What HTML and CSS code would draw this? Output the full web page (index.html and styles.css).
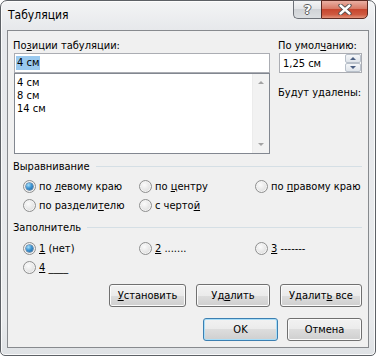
FILE: index.html
```html
<!DOCTYPE html>
<html lang="ru">
<head>
    <meta charset="UTF-8">
    <title>Табуляция</title>
    <link rel="stylesheet" href="styles.css">
</head>
<body>
    <div class="window">
        <div class="titlebar">
            <span class="title">Табуляция</span>
            <div class="caption">
                <div class="cap help">?</div>
                <div class="cap close">
                    <svg width="14" height="11" viewBox="0 0 14 11">
                        <path d="M2.5 1.5 L11.5 9.5 M11.5 1.5 L2.5 9.5" stroke="#4a4a4a" stroke-width="4.2" stroke-linecap="round" fill="none"/>
                        <path d="M2.5 1.5 L11.5 9.5 M11.5 1.5 L2.5 9.5" stroke="#fff" stroke-width="2.4" stroke-linecap="round" fill="none"/>
                    </svg>
                </div>
            </div>
        </div>

        <div class="client">
            <div class="top">
                <div class="positions">
                    <div class="lbl">По<u>з</u>иции табуляции:</div>
                    <div class="field"><span class="sel">4 см</span></div>
                    <div class="list">
                        <div class="items">
                            <div>4 см</div>
                            <div>8 см</div>
                            <div>14 см</div>
                        </div>
                        <div class="scrollbar">
                            <div class="sb-btn"><span class="arrow up"></span></div>
                            <div class="sb-btn"><span class="arrow down"></span></div>
                        </div>
                    </div>
                </div>
                <div class="defaults">
                    <div class="lbl">По умол<u>ч</u>анию:</div>
                    <div class="spin">
                        <span class="spin-value">1,25 см</span>
                        <div class="spin-btns">
                            <div class="spin-btn"><span class="tri up"></span></div>
                            <div class="spin-btn"><span class="tri down"></span></div>
                        </div>
                    </div>
                    <div class="cleared">Будут удалены:</div>
                </div>
            </div>

            <div class="group-head">Выравнивание</div>
            <div class="options">
                <div class="opt"><span class="radio checked"></span><span>по <u>л</u>евому краю</span></div>
                <div class="opt"><span class="radio"></span><span>по <u>ц</u>ентру</span></div>
                <div class="opt"><span class="radio"></span><span>по <u>п</u>равому краю</span></div>
                <div class="opt"><span class="radio"></span><span>по раздели<u>т</u>елю</span></div>
                <div class="opt"><span class="radio"></span><span>с черто<u>й</u></span></div>
            </div>

            <div class="group-head">Заполнитель</div>
            <div class="options fill">
                <div class="opt"><span class="radio checked"></span><span><u>1</u> (нет)</span></div>
                <div class="opt"><span class="radio"></span><span><u>2</u> .......</span></div>
                <div class="opt"><span class="radio"></span><span><u>3</u> -------</span></div>
                <div class="opt"><span class="radio"></span><span><u>4</u> ____</span></div>
            </div>

            <div class="btn-row">
                <button class="btn w77"><u>У</u>становить</button>
                <button class="btn w74">Уд<u>а</u>лить</button>
                <button class="btn w82">Удалит<u>ь</u> все</button>
            </div>
            <div class="btn-row second">
                <button class="btn w75 default">OK</button>
                <button class="btn w75">Отмена</button>
            </div>
        </div>
    </div>
</body>
</html>
```

FILE: styles.css
```css
body {
    margin: 0;
    background: #fff;
    font-family: "DejaVu Sans Condensed", "DejaVu Sans", sans-serif;
    font-stretch: condensed;
    font-size: 11px;
    color: #000;
    white-space: nowrap;
}

u {
    text-underline-offset: 1px;
}

.window {
    width: 376px;
    height: 356px;
    box-sizing: border-box;
    border: 1px solid #5d6166;
    border-radius: 7px 7px 5px 5px;
    background: linear-gradient(#f3f4f5, #e6e8eb 30px, #e8eaec 90%, #dfe2e5);
    box-shadow: inset 0 0 0 1px rgba(255, 255, 255, 0.8);
    padding: 0 6px 7px;
    display: flex;
    flex-direction: column;
}

.titlebar {
    height: 29px;
    display: flex;
    align-items: flex-start;
    flex-shrink: 0;
}

.title {
    padding: 7px 0 0 1px;
    line-height: 15px;
    font-size: 12px;
}

.caption {
    margin-left: auto;
    margin-right: 1px;
    margin-top: -1px;
    display: flex;
}

.cap {
    height: 19px;
    box-sizing: border-box;
    display: flex;
    align-items: center;
    justify-content: center;
}

.help {
    width: 28px;
    border: 1px solid #6d7178;
    border-right: none;
    border-radius: 0 0 0 5px;
    background: linear-gradient(#f4f5f6, #e3e5e8 45%, #d0d3d7 50%, #dcdfe2);
    color: #fff;
    font-family: "DejaVu Sans", sans-serif;
    font-stretch: normal;
    font-weight: bold;
    font-size: 13px;
    text-shadow: 1px 0 #5a5a5a, -1px 0 #5a5a5a, 0 1px #5a5a5a, 0 -1px #5a5a5a;
}

.close {
    width: 47px;
    border: 1px solid #5c2920;
    border-radius: 0 0 5px 0;
    background: linear-gradient(#eab0a3, #d87a66 45%, #c7462e 50%, #cf5a40 80%, #e3937b);
}

.client {
    flex: 1;
    border: 1px solid #878a8e;
    background: #f0f0f0;
    padding: 7px 6px 0;
    display: flex;
    flex-direction: column;
}

.top {
    display: grid;
    grid-template-columns: 256px 83px;
    column-gap: 9px;
}

.lbl {
    height: 15px;
    line-height: 15px;
    margin-left: -1px;
}

.field {
    height: 20px;
    box-sizing: border-box;
    border: 1px solid #abadb3;
    background: #fff;
    display: flex;
    align-items: center;
    padding-left: 1px;
}

.sel {
    background: #99c9ef;
    line-height: 14px;
    padding: 0 1px;
}

.list {
    height: 81px;
    box-sizing: border-box;
    border: 1px solid #828790;
    background: #fff;
    display: flex;
}

.items {
    flex: 1;
    padding: 2px 0 0 2px;
    line-height: 13px;
}

.scrollbar {
    width: 17px;
    background: #f2f2f2;
    border-left: 1px solid #ececec;
    box-sizing: border-box;
    display: flex;
    flex-direction: column;
    justify-content: space-between;
}

.sb-btn {
    height: 17px;
    display: flex;
    align-items: center;
    justify-content: center;
}

.arrow {
    width: 0;
    height: 0;
    border-left: 3px solid transparent;
    border-right: 3px solid transparent;
}

.arrow.up {
    border-bottom: 3px solid #a3a3a3;
}

.arrow.down {
    border-top: 3px solid #a3a3a3;
}

.spin {
    height: 20px;
    box-sizing: border-box;
    border: 1px solid #abadb3;
    background: #fff;
    display: flex;
    align-items: center;
}

.spin-value {
    flex: 1;
    padding-left: 3px;
}

.spin-btns {
    width: 16px;
    align-self: stretch;
    display: flex;
    flex-direction: column;
}

.spin-btn {
    flex: 1;
    border: 1px solid #b8c0ca;
    border-radius: 2px;
    background: linear-gradient(#f5f7f9, #dfe4ea);
    display: flex;
    align-items: center;
    justify-content: center;
}

.tri {
    width: 0;
    height: 0;
    border-left: 3px solid transparent;
    border-right: 3px solid transparent;
}

.tri.up {
    border-bottom: 3px solid #4b5f82;
}

.tri.down {
    border-top: 3px solid #4b5f82;
}

.cleared {
    margin-top: 12px;
    line-height: 15px;
    margin-left: -1px;
}

.group-head {
    display: flex;
    align-items: center;
    gap: 6px;
    margin-top: 5px;
    line-height: 15px;
    margin-left: -1px;
}

.group-head::after {
    content: "";
    flex: 1;
    height: 1px;
    background: #d5dfe5;
}

.options {
    display: grid;
    grid-template-columns: 116px 116px auto;
    margin-top: 3px;
    padding-left: 9px;
}

.options.fill {
    margin-top: 4px;
}

.opt {
    height: 19px;
    display: flex;
    align-items: center;
    gap: 3px;
}

.radio {
    width: 13px;
    height: 13px;
    box-sizing: border-box;
    border-radius: 50%;
    border: 1px solid #8e8f8f;
    background: radial-gradient(circle at 40% 35%, #fbfbfb, #e6e6e6 55%, #cfcfcf);
    box-shadow: inset 0 0 0 1px #f4f4f4;
    display: flex;
    align-items: center;
    justify-content: center;
    flex-shrink: 0;
}

.radio.checked::after {
    content: "";
    width: 7px;
    height: 7px;
    border-radius: 50%;
    background: radial-gradient(circle at 35% 30%, #a6e0fb, #3f95d2 45%, #135c9c);
    box-shadow: 0 0 0 0.5px #1d4f7f;
}

.btn-row {
    display: flex;
    justify-content: flex-end;
    gap: 10px;
    margin-top: 7px;
}

.btn-row.second {
    gap: 9px;
    margin-top: 11px;
}

.btn {
    height: 23px;
    box-sizing: border-box;
    padding: 0;
    border: 1px solid #707070;
    border-radius: 3px;
    background: linear-gradient(#f2f2f2, #ebebeb 50%, #dddddd 50%, #cfcfcf);
    box-shadow: inset 0 0 0 1px #fbfbfb;
    font: inherit;
    color: #000;
    line-height: 21px;
}

.btn.default {
    border-color: #3c7fb1;
    box-shadow: inset 0 0 0 1px #a9def8;
}

.w74 { width: 74px; }
.w75 { width: 75px; }
.w77 { width: 77px; }
.w82 { width: 82px; }
```
